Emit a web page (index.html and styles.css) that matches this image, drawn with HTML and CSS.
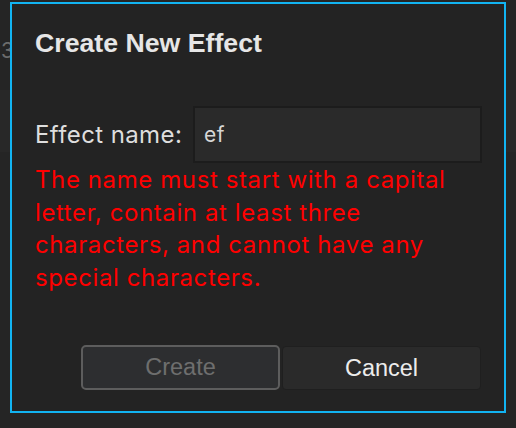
FILE: index.html
```html
<!DOCTYPE html>
<html lang="en">
<head>
    <meta charset="UTF-8">
    <title>Create New Effect</title>
    <link rel="stylesheet" href="styles.css">
</head>
<body>

<!-- contenido detras del dialogo -->
<div class="backdrop">
    <span class="behind-num">3</span>
    <div class="behind-band"></div>
</div>

<div class="dialog">
    <h1 class="dialog-title">Create New Effect</h1>

    <div class="field-row">
        <label for="effectName">Effect name:</label>
        <input type="text" id="effectName" class="name-input" value="ef">
    </div>
    <p class="error-text">The name must start with a capital letter, contain at least three characters, and cannot have any special characters.</p>

    <div class="buttons">
        <button class="btn btn-create" disabled>Create</button>
        <button class="btn btn-cancel">Cancel</button>
    </div>
</div>

</body>
</html>
```

FILE: styles.css
```css
/* Estilos principales */
body {
    margin: 0;
    padding: 0;
    width: 516px;
    height: 428px;
    background: #252525;
    overflow: hidden;
    position: relative;
    font-family: Inter, "Noto Sans", sans-serif;
}
.backdrop {
    position: absolute;
    inset: 0;
}
.behind-num {
    position: absolute;
    left: 1px;
    top: 38px;
    font-size: 21px;
    color: #6c6c6c;
}
.behind-band {
    position: absolute;
    left: 0;
    right: 0;
    top: 90px;
    height: 62px;
    background: #282828;
}
.dialog {
    position: absolute;
    left: 10px;
    top: 2px;
    width: 496px;
    height: 411px;
    border: 2px solid #12b4f2;
    background: #232323;
    padding: 0 22px 21px 23px;
    box-sizing: border-box;
    display: flex;
    flex-direction: column;
}
.dialog-title {
    font-family: "Liberation Sans", Arial, sans-serif;
    font-weight: bold;
    font-size: 26.7px;
    line-height: 30px;
    color: #e6e6e6;
    margin: 24px 0 0 0;
}
.field-row {
    display: flex;
    align-items: center;
    justify-content: space-between;
    margin-top: 48px;
}
.field-row label {
    font-size: 24px;
    letter-spacing: 0.4px;
    color: #dedede;
    white-space: nowrap;
}
.name-input {
    width: 289px;
    flex: none;
    height: 57px;
    box-sizing: border-box;
    background: #2a2a2a;
    border: 2px solid #1c1c1c;
    padding: 0 9px;
    font-family: Inter, sans-serif;
    font-size: 21px;
    letter-spacing: 0.4px;
    color: #d6d6d6;
    outline: none;
}
.error-text {
    margin: 1px 0 0 0;
    font-size: 24px;
    letter-spacing: 0.6px;
    line-height: 32.5px;
    color: #ff0000;
}
.buttons {
    margin-top: auto;
    display: flex;
    justify-content: flex-end;
    gap: 2px;
    padding-right: 1px;
}
.btn {
    width: 199px;
    height: 45px;
    box-sizing: border-box;
    font-family: "Liberation Sans", Arial, sans-serif;
    font-size: 23.5px;
    border-radius: 4px;
    cursor: pointer;
}
.btn-create {
    background: #2d2e30;
    border: 2px solid #5d5d5d;
    border-radius: 5px;
    color: #6e6e6e;
    cursor: default;
}
.btn-cancel {
    background: #2a2a2a;
    border: 1px solid #1f1f1f;
    color: #ececec;
    height: 44px;
    margin-top: 1px;
}
```
